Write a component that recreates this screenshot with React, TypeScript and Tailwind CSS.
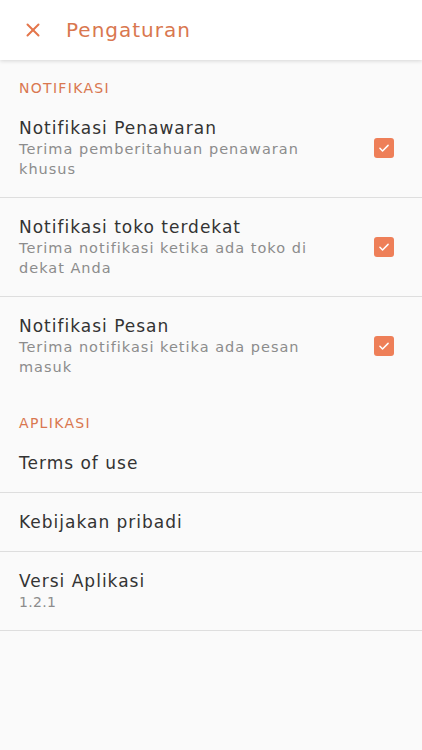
import { X } from "lucide-react";

const notifs = [
  { title: "Notifikasi Penawaran", desc: "Terima pemberitahuan penawaran khusus" },
  { title: "Notifikasi toko terdekat", desc: "Terima notifikasi ketika ada toko di dekat Anda" },
  { title: "Notifikasi Pesan", desc: "Terima notifikasi ketika ada pesan masuk" },
];

const Checkbox = () => (
  <div className="w-[20px] h-[20px] rounded-[3px] bg-[#ee7f58] flex items-center justify-center shrink-0">
    <svg width="14" height="14" viewBox="0 0 24 24" fill="none" stroke="white" strokeWidth="2.6" strokeLinecap="round" strokeLinejoin="round">
      <path d="M5 12.5l4.5 4.5L19 7.5" />
    </svg>
  </div>
);

const SectionLabel = ({ children }: { children: string }) => (
  <div className="px-[19px] pt-5 pb-[3px] text-[14px] leading-[16px] text-[#d9774f] tracking-[1.3px]">{children}</div>
);

export default function App() {
  return (
    <div className="w-[422px] h-[750px] bg-[#fafafa] font-['DejaVu_Sans',sans-serif] overflow-hidden">
      {/* Header */}
      <div className="h-[60px] bg-white flex items-center shadow-[0_1px_4px_rgba(0,0,0,0.15)] relative z-10">
        <X className="ml-[22px] w-[22px] h-[22px] text-[#e4764c]" strokeWidth={2.2} />
        <span className="ml-[22px] text-[20px] text-[#d9774f] tracking-[1px]">Pengaturan</span>
      </div>

      <SectionLabel>NOTIFIKASI</SectionLabel>
      {notifs.map((n, i) => (
        <div
          key={n.title}
          className={`flex items-center justify-between pl-[19px] pr-[28px] py-[18px] ${i < notifs.length - 1 ? "border-b border-[#dedede]" : ""}`}
        >
          <div className="w-[310px]">
            <div className="text-[17px] leading-[22px] text-[#333333] tracking-[1px]">{n.title}</div>
            <div className="text-[14.5px] leading-[20px] text-[#8c8c8c] tracking-[1px]">{n.desc}</div>
          </div>
          <Checkbox />
        </div>
      ))}

      <SectionLabel>APLIKASI</SectionLabel>
      <div className="pl-[19px] py-[18px] border-b border-[#dedede] text-[17px] leading-[22px] text-[#333333] tracking-[1px]">Terms of use</div>
      <div className="pl-[19px] py-[18px] border-b border-[#dedede] text-[17px] leading-[22px] text-[#333333] tracking-[1px]">Kebijakan pribadi</div>
      <div className="pl-[19px] py-[18px] border-b border-[#dedede]">
        <div className="text-[17px] leading-[22px] text-[#333333] tracking-[1px]">Versi Aplikasi</div>
        <div className="text-[14px] leading-[20px] text-[#8c8c8c] tracking-[0.3px]">1.2.1</div>
      </div>
    </div>
  );
}
